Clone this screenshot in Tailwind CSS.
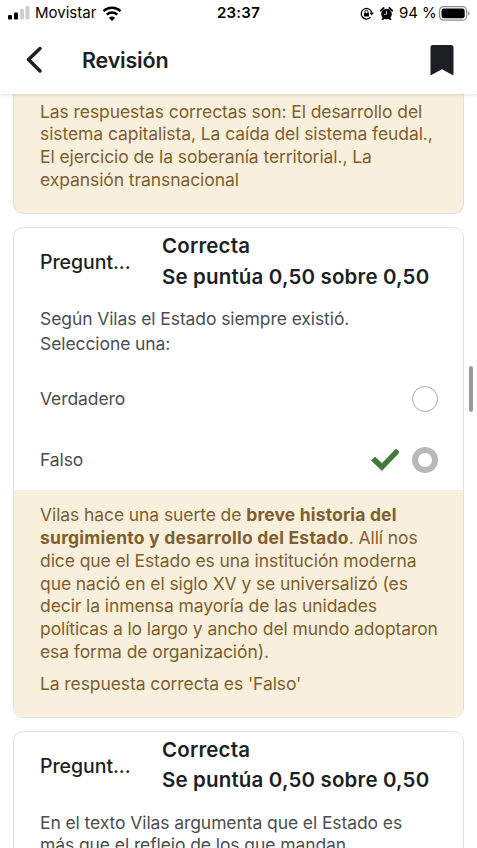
<!DOCTYPE html>
<html lang="es">
<head>
<meta charset="utf-8">
<title>Revisión</title>
<script src="https://cdn.jsdelivr.net/npm/@tailwindcss/browser@4"></script>
</head>
<body class="bg-white">
<div class="w-[477px] h-[848px] overflow-hidden relative flex flex-col font-['Inter',sans-serif] text-[#1d1f24] whitespace-nowrap">
  <header class="h-[94px] shrink-0 bg-white relative z-10 shadow-[0_1px_4px_rgba(0,0,0,0.13)]">
    <div class="h-[26px] grid grid-cols-3 items-center text-black text-[15px] leading-[26px]">
      <div class="flex items-center pl-2">
        <svg class="w-[22px] h-[14px]" viewBox="0 0 22 14"><rect x="0" y="9" width="4" height="4.500" rx="1"/><rect x="6" y="6.500" width="4" height="7" rx="1"/><rect x="12" y="3" width="4" height="10.500" rx="1" fill="#cfcfcf"/><rect x="17.500" y="0" width="4" height="13.500" rx="1" fill="#cfcfcf"/></svg>
        <span class="ml-[5px] w-[62px]">Movistar</span>
        <svg class="ml-[5px] w-5 h-[15px]" viewBox="0 0 20 15"><path d="M1.500 5.200C6.300.7 13.700.7 18.500 5.200M4.700 8.600c3-2.800 7.600-2.800 10.600 0" fill="none" stroke="#000" stroke-width="2.500"/><path d="M10 15l-3.200-3.300c1.800-1.500 4.600-1.500 6.400 0z"/></svg>
      </div>
      <span class="text-center font-semibold tracking-[0.25px]">23:37</span>
      <div class="flex items-center justify-end pr-[7px]">
        <svg class="w-[14px] h-[13px]" viewBox="0 0 14 13"><path d="M10.600 10.200A5.300 5.300 0 1 1 11.700 5.500" fill="none" stroke="#000" stroke-width="1.300"/><path d="M9.500 5.500h4.300l-2 3z"/><rect x="4" y="6" width="5" height="3.600" rx=".5"/><path d="M5 6V4.800a1.500 1.500 0 0 1 3 0V6" fill="none" stroke="#000"/></svg>
        <svg class="ml-[6px] w-[13px] h-[13px]" viewBox="0 0 13 13"><circle cx="6.500" cy="7" r="5.300"/><path d="M.8 3.700L3.700 1M12.200 3.700L9.300 1M2.500 12.500l1.500-2M10.500 12.500L9 10.500" stroke="#000" stroke-width="1.800" stroke-linecap="round"/><path d="M6.500 3.800V7.300H4" stroke="#fff" stroke-width=".8" fill="none"/></svg>
        <span class="ml-[6px] w-[37px] tracking-[-0.1px]">94 %</span>
        <svg class="ml-[3px] w-[31px] h-[15px]" viewBox="0 0 31 15"><rect x=".6" y=".6" width="27" height="13.600" rx="4" fill="none" stroke="#8b8b8b" stroke-width="1.200"/><rect x="2.500" y="2.500" width="23.200" height="9.800" rx="2.400"/><path d="M29 5.200c2 .8 2 3.600 0 4.400z" fill="#8b8b8b"/></svg>
      </div>
    </div>
    <div class="h-[68px] flex items-center pl-[25px] pr-[23px]">
      <svg class="w-[18px] h-7" viewBox="0 0 18 28"><path d="M15 2.500L3.500 13.500 15 25" fill="none" stroke="#1d1f24" stroke-width="3.500" stroke-linecap="round" stroke-linejoin="round"/></svg>
      <h1 class="ml-[39px] text-[21.500px] font-semibold tracking-[-0.2px]">Revisión</h1>
      <svg class="ml-auto w-[24px] h-[31px]" viewBox="0 0 24 31"><path d="M2.500 0h19A2.200 2.200 0 0 1 23.500 2.200v28.400L12 24.200.5 30.600V2.200A2.200 2.200 0 0 1 2.500 0z" fill="#1d1f24"/></svg>
    </div>
  </header>
  <main class="px-[13px] flex flex-col gap-[13px]">
    <section class="h-[120px] shrink-0 rounded-b-[10px] border border-t-0 border-[#dddfe3] bg-[#f9efdd] text-[#7e5f2f] pl-[26px] pt-[6.500px] text-[17.500px] leading-[22.900px] tracking-[-0.08px]">
      <p>Las respuestas correctas son: El desarrollo del<br>sistema capitalista, La caída del sistema feudal.,<br>El ejercicio de la soberanía territorial., La<br>expansión transnacional</p>
    </section>
    <section class="h-[490.500px] shrink-0 rounded-[10px] border border-[#dddfe3] overflow-hidden flex flex-col text-[17.500px] tracking-[-0.09px] text-[#4b4e53]">
      <div class="h-[78px] pl-[26px] flex pt-[3px] text-[#1d1f24]">
        <h2 class="w-[122px] leading-[62px] text-[19.500px] font-medium tracking-[-0.05px]">Pregunt...</h2>
        <p class="text-[20.500px] leading-[30.500px] font-semibold tracking-[0.16px]">Correcta<br>Se puntúa 0,50 sobre 0,50</p>
      </div>
      <p class="h-[62px] pl-[26px] leading-[25.300px]">Según Vilas el Estado siempre existió.<br>Seleccione una:</p>
      <div class="h-[61px] pl-[26px] pr-[25px] flex items-center justify-between"><span class="pt-0.5">Verdadero</span><span class="w-[26px] h-[26px] rounded-full border border-[#aaaaaa]"></span></div>
      <div class="h-[61px] pl-[26px] pr-[25px] flex items-center"><span class="pt-0.5">Falso</span>
        <svg class="ml-auto w-7 h-[22px]" viewBox="0 0 28 22"><path d="M.5 11.500L4 8l7 6.500L24.300.8q1-.8 2 .2l1.200 1.300q.8 1-.2 2L11 21.500z" fill="#417a38" stroke="#417a38" stroke-width=".8" stroke-linejoin="round"/></svg>
        <span class="ml-[13px] w-[26px] h-[26px] rounded-full border-[6.500px] border-[#b7b8ba]"></span></div>
      <div class="flex-1 bg-[#f9efdd] text-[#7e5f2f] pl-[26px] pt-[14px] leading-[22.850px]">
        <p>Vilas hace una suerte de <b class="tracking-[0.16px]">breve historia del</b><br><b class="tracking-[0.23px]">surgimiento y desarrollo del Estado</b>. Allí nos<br>dice que el Estado es una institución moderna<br>que nació en el siglo XV y se universalizó (es<br>decir la inmensa mayoría de las unidades<br>políticas a lo largo y ancho del mundo adoptaron<br>esa forma de organización).</p>
        <p class="mt-[9px]">La respuesta correcta es 'Falso'</p>
      </div>
    </section>
    <section class="h-[200px] shrink-0 rounded-[10px] border border-[#dddfe3] text-[17.500px] tracking-[-0.09px] text-[#4b4e53]">
      <div class="h-[80px] pl-[26px] flex pt-[3px] text-[#1d1f24]">
        <h2 class="w-[122px] leading-[62px] text-[19.500px] font-medium tracking-[-0.05px]">Pregunt...</h2>
        <p class="text-[20.500px] leading-[30.500px] font-semibold tracking-[0.16px]">Correcta<br>Se puntúa 0,50 sobre 0,50</p>
      </div>
      <p class="pl-[26px] leading-[22.900px]">En el texto Vilas argumenta que el Estado es<br>más que el reflejo de los que mandan</p>
    </section>
  </main>
  <div class="absolute left-[469px] top-[366px] w-1 h-[46px] rounded-full bg-[#999b9d]"></div>
</div>
</body>
</html>
